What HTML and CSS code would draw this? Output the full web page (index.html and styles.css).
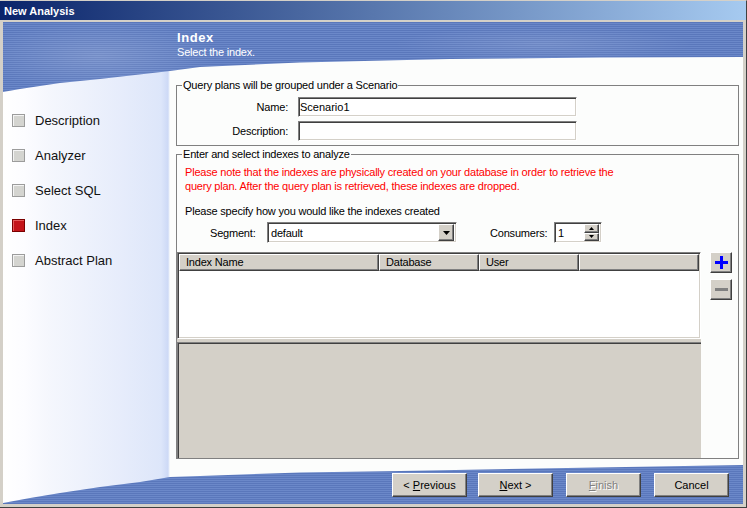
FILE: index.html
```html
<!DOCTYPE html>
<html lang="en">
<head>
    <meta charset="UTF-8">
    <meta name="viewport" content="width=device-width, initial-scale=1.0">
    <title>New Analysis</title>
    <link rel="stylesheet" href="styles.css">
</head>
<body>
    <div class="window">
        <div class="titlebar">New Analysis</div>
        <div class="frame">
            <div class="banner">
                <h1>Index</h1>
                <p>Select the index.</p>
            </div>
            <div class="main">
                <ul class="steps">
                    <li><span class="box"></span>Description</li>
                    <li><span class="box"></span>Analyzer</li>
                    <li><span class="box"></span>Select SQL</li>
                    <li class="current"><span class="box"></span>Index</li>
                    <li><span class="box"></span>Abstract Plan</li>
                </ul>
                <div class="content">
                    <fieldset class="group scenario">
                        <legend>Query plans will be grouped under a Scenario</legend>
                        <div class="form">
                            <label for="name">Name:</label>
                            <input class="field" type="text" id="name" value="Scenario1">
                            <label for="desc">Description:</label>
                            <input class="field" type="text" id="desc" value="">
                        </div>
                    </fieldset>
                    <fieldset class="group indexes">
                        <legend>Enter and select indexes to analyze</legend>
                        <p class="note">Please note that the indexes are physically created on your database in order to retrieve the<br>query plan. After the query plan is retrieved, these indexes are dropped.</p>
                        <p class="hint">Please specify how you would like the indexes created</p>
                        <div class="options">
                            <span class="lbl seg">Segment:</span>
                            <div class="combo">
                                <span class="value">default</span>
                                <span class="drop"><svg width="7" height="4" viewBox="0 0 7 4"><polygon points="0,0 7,0 3.5,4" fill="#000"/></svg></span>
                            </div>
                            <span class="lbl cons">Consumers:</span>
                            <div class="spin">
                                <span class="value">1</span>
                                <span class="spin-btns">
                                    <span class="arrow"><svg width="5" height="3" viewBox="0 0 5 3"><polygon points="0,3 5,3 2.5,0" fill="#000"/></svg></span>
                                    <span class="arrow"><svg width="5" height="3" viewBox="0 0 5 3"><polygon points="0,0 5,0 2.5,3" fill="#000"/></svg></span>
                                </span>
                            </div>
                        </div>
                        <div class="listrow">
                            <div class="listcol">
                                <div class="list">
                                    <div class="thead">
                                        <span class="th c-name">Index Name</span>
                                        <span class="th c-db">Database</span>
                                        <span class="th c-user">User</span>
                                        <span class="th c-rest"></span>
                                    </div>
                                </div>
                                <div class="splitter"></div>
                                <div class="panel"></div>
                            </div>
                            <div class="tools">
                                <button class="tool" id="add"><svg width="13" height="13" viewBox="0 0 13 13"><rect x="0" y="5" width="13" height="3" fill="#0000ff"/><rect x="5" y="0" width="3" height="13" fill="#0000ff"/></svg></button>
                                <button class="tool" id="remove" disabled><svg width="13" height="3" viewBox="0 0 13 3"><rect x="0" y="0" width="13" height="3" fill="#808080"/></svg></button>
                            </div>
                        </div>
                    </fieldset>
                </div>
            </div>
            <div class="footer">
                <button class="btn prev">&lt; <u>P</u>revious</button>
                <button class="btn"><u>N</u>ext &gt;</button>
                <button class="btn" disabled><u>F</u>inish</button>
                <button class="btn">Cancel</button>
            </div>
        </div>
    </div>
</body>
</html>
```

FILE: styles.css
```css
*{
    margin: 0;
    padding: 0;
    box-sizing: border-box;
}
body{
    width: 747px;
    height: 508px;
    overflow: hidden;
    font-family: "Liberation Sans", Arial, sans-serif;
    font-size: 11px;
    letter-spacing: -0.2px;
    color: #000;
    background: #d4d0c8;
}
.window{
    width: 747px;
    height: 508px;
    display: flex;
    flex-direction: column;
    border-top: 1px solid #d4d0c8;
    border-right: 1px solid #404040;
    border-bottom: 1px solid #404040;
}
.titlebar{
    height: 19px;
    padding: 1px 0 0 4px;
    line-height: 18px;
    font-weight: bold;
    letter-spacing: 0;
    color: #fff;
    background: linear-gradient(to right, #0a246a, #a6caf0);
}
.frame{
    flex: 1;
    display: flex;
    flex-direction: column;
    border-style: solid;
    border-color: #d4d0c8;
    border-width: 2px 3px 3px 3px;
    background: linear-gradient(to right, #fff 0, #fcfcff 22px, #f5f7fd 45px, #eef2fc 80px, #e6ecfb 120px, #dde6fa 158px, #cdd9f6 165px, #fcfdfc 167px);
}

/* header banner */
.banner{
    height: 70px;
    padding: 8px 0 0 174px;
    color: #fff;
    background:
        radial-gradient(ellipse 120px 36px at 95px 34px, rgba(255,255,255,.16), transparent),
        radial-gradient(ellipse 150px 18px at 540px 22px, rgba(255,255,255,.12), transparent),
        repeating-linear-gradient(to bottom, #5a77bb 0 1px, #6b88c9 1px 2px);
    clip-path: polygon(0 0, 740px 0, 740px 35px, 597px 35.5px, 447px 37px, 297px 40.5px, 197px 45px, 167px 49px, 97px 57px, 57px 61px, 17px 67px, 0 70px);
}
.banner h1{
    font-size: 13px;
    line-height: 15px;
    letter-spacing: 0.6px;
}
.banner p{
    margin-top: 1px;
    line-height: 13px;
}

/* body */
.main{
    flex: 1;
    margin-top: -20px;
    display: flex;
}
.steps{
    width: 167px;
    padding-top: 31px;
    list-style: none;
}
.steps li{
    height: 35px;
    display: flex;
    align-items: center;
    gap: 10px;
    padding-left: 9px;
    font-size: 13px;
    letter-spacing: 0;
    color: #111;
}
.box{
    width: 13px;
    height: 13px;
    background: #d4d4d0;
    border: 1px solid #9c9c9c;
    box-shadow: inset 1px 1px #f4f4f4;
}
.current .box{
    background: #c4141a;
    border-color: #7a0000;
    box-shadow: inset 1px 1px #e45a5a;
}
.content{
    flex: 1;
    padding: 7px 4px 0 6px;
}
.group{
    border: 1px solid #808080;
    min-width: 0;
}
.group legend{
    margin-left: 5px;
    padding: 0 1px;
    line-height: 13px;
}
.form{
    display: grid;
    grid-template-columns: 111px 279px;
    gap: 4px 10px;
    align-items: center;
    padding: 5px 0 4px;
}
.form label{
    text-align: right;
}
.field, .combo, .spin{
    height: 20px;
    background: #fff;
    border: 1px solid;
    border-color: #808080 #fff #fff #808080;
    box-shadow: inset 1px 1px #404040, inset -1px -1px #d4d0c8;
}
.field{
    font: inherit;
    padding: 0 1px;
    outline: none;
}
.indexes{
    margin-top: 2px;
}
.note{
    color: #ff0000;
    padding: 4px 8px 0;
    line-height: 14px;
}
.hint{
    margin-top: 12px;
    padding-left: 8px;
    line-height: 13px;
}
.options{
    display: flex;
    align-items: center;
    height: 21px;
    margin-top: 4px;
    padding-left: 33px;
}
.seg{
    width: 57px;
}
.cons{
    width: 64px;
    margin-left: 33px;
}
.combo, .spin{
    height: 21px;
    display: flex;
    align-items: center;
    padding: 2px;
}
.combo{
    width: 190px;
}
.spin{
    width: 48px;
}
.combo .value, .spin .value{
    padding-left: 1px;
}
.drop, .arrow, .th, .tool, .btn{
    background: #d4d0c8;
    border: 1px solid;
    border-color: #fff #404040 #404040 #fff;
    box-shadow: inset -1px -1px #808080;
}
.drop{
    margin-left: auto;
    width: 16px;
    height: 17px;
    display: flex;
    align-items: center;
    justify-content: center;
}
.spin-btns{
    margin-left: auto;
    width: 15px;
    height: 17px;
    display: flex;
    flex-direction: column;
}
.arrow{
    flex: 1;
    display: flex;
    align-items: center;
    justify-content: center;
}
.arrow svg, .drop svg{
    display: block;
}
.listrow{
    display: flex;
    margin-top: 9px;
}
.listcol{
    width: 524px;
    display: flex;
    flex-direction: column;
}
.list{
    height: 87px;
    background: #fff;
    border: 1px solid;
    border-color: #808080 #fff #fff #808080;
    box-shadow: inset 1px 1px #404040, inset -1px -1px #d4d0c8;
    padding: 1px;
}
.thead{
    display: flex;
    height: 17px;
}
.th{
    height: 17px;
    padding-left: 6px;
    line-height: 15px;
}
.c-name{ width: 200px; }
.c-db{ width: 100px; }
.c-user{ width: 100px; }
.c-rest{ flex: 1; }
.splitter{
    height: 3px;
    background: #d4d0c8;
}
.panel{
    height: 116px;
    background: #d4d0c8;
    border-top: 1px solid #808080;
    border-left: 1px solid #808080;
    box-shadow: inset 1px 1px #404040;
}
.tools{
    display: flex;
    flex-direction: column;
    gap: 6px;
    margin-left: 9px;
}
.tool{
    width: 22px;
    height: 21px;
    display: flex;
    align-items: center;
    justify-content: center;
}
.tool svg{
    display: block;
}

/* footer */
.footer{
    height: 39px;
    display: flex;
    justify-content: flex-end;
    align-items: flex-start;
    gap: 13px;
    padding: 8px 14px 0 0;
    background: repeating-linear-gradient(to bottom, #5a77bb 0 1px, #6b88c9 1px 2px);
    clip-path: polygon(740px 0, 397px 6px, 297px 7.5px, 197px 11px, 167px 12px, 137px 17px, 97px 22px, 57px 28px, 27px 33px, 0 38px, 0 39px, 740px 39px);
}
.btn{
    width: 75px;
    height: 24px;
    font: inherit;
    color: #000;
}
.prev{
    margin-right: -2px;
}
.btn:disabled{
    color: #808080;
    text-shadow: 1px 1px #fff;
}
```
